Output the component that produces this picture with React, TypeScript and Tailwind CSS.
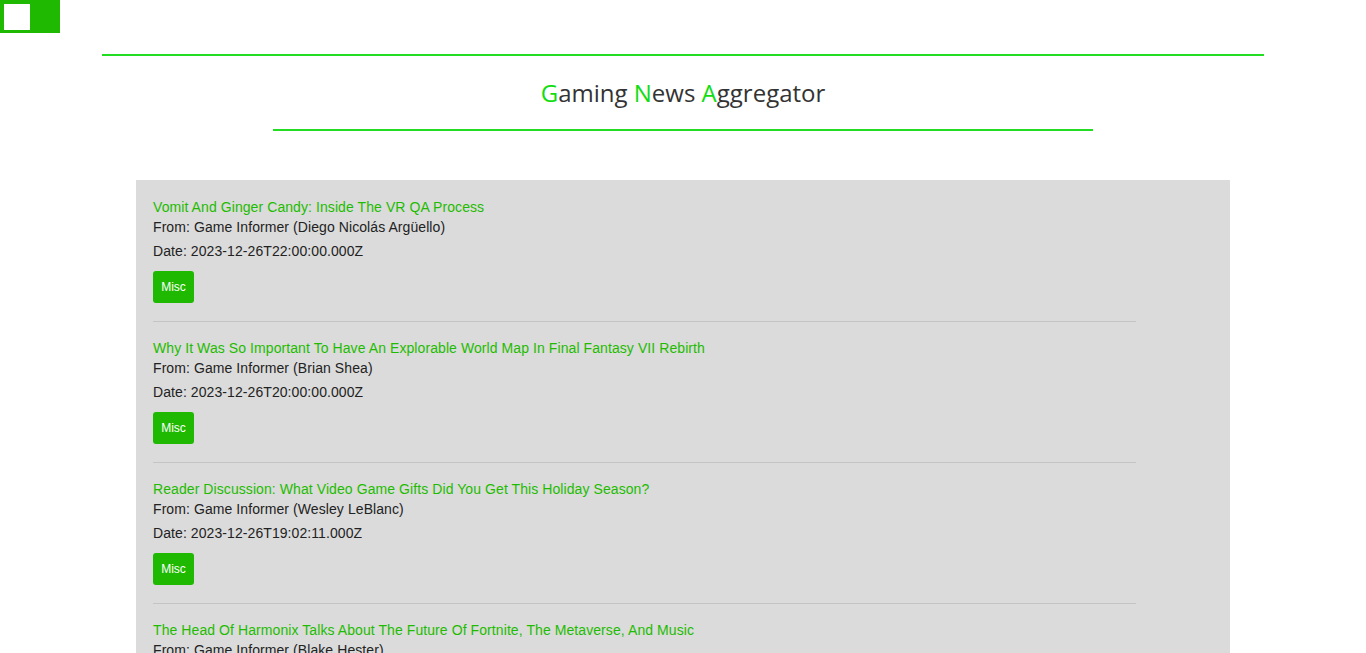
const articles = [
  {
    title: 'Vomit And Ginger Candy: Inside The VR QA Process',
    source: 'Game Informer (Diego Nicolás Argüello)',
    date: '2023-12-26T22:00:00.000Z',
    tag: 'Misc',
  },
  {
    title: 'Why It Was So Important To Have An Explorable World Map In Final Fantasy VII Rebirth',
    source: 'Game Informer (Brian Shea)',
    date: '2023-12-26T20:00:00.000Z',
    tag: 'Misc',
  },
  {
    title: 'Reader Discussion: What Video Game Gifts Did You Get This Holiday Season?',
    source: 'Game Informer (Wesley LeBlanc)',
    date: '2023-12-26T19:02:11.000Z',
    tag: 'Misc',
  },
  {
    title: 'The Head Of Harmonix Talks About The Future Of Fortnite, The Metaverse, And Music',
    source: 'Game Informer (Blake Hester)',
    date: '2023-12-26T17:00:00.000Z',
    tag: 'Misc',
  },
];

function ArticleItem({ a }: { a: (typeof articles)[number] }) {
  return (
    <div className="tracking-[0.08px]">
      <a className="block text-[14px] leading-[20px] text-[#1ebb00]">{a.title}</a>
      <p className="text-[14px] leading-[20px] text-[#222]">From: {a.source}</p>
      <p className="mt-1 text-[14px] leading-[20px] text-[#222]">Date: {a.date}</p>
      <button className="mt-[10px] h-[32px] w-[41px] rounded-[3px] bg-[#1eb900] text-[12px] tracking-normal text-white">
        {a.tag}
      </button>
      <hr className="mt-[18px] mb-4 w-[983px] border-0 border-t border-[#c4c4c4]" />
    </div>
  );
}

export default function App() {
  return (
    <div className="min-h-screen bg-white font-['Liberation_Sans',Arial,sans-serif]">
      <div className="h-[33px] w-[60px] bg-[#1eb900] p-1">
        <div className="h-[26px] w-[26px] bg-white" />
      </div>

      <header className="mx-[102px] mt-[21px] border-t-2 border-[#22dd22]">
        <h1 className="mt-[20px] text-center font-['Open_Sans',sans-serif] text-[24px] leading-[34px] text-[#333]">
          <span className="text-[#11dd11]">G</span>aming <span className="text-[#11dd11]">N</span>ews{' '}
          <span className="text-[#11dd11]">A</span>ggregator
        </h1>
        <div className="mx-auto mt-[19px] h-[2px] w-[820px] bg-[#22dd22]" />
      </header>

      <main className="mx-[136px] mt-[49px] bg-[#dbdbdb] pl-[17px] pt-[17px]">
        {articles.map(a => (
          <ArticleItem key={a.title} a={a} />
        ))}
      </main>
    </div>
  );
}
